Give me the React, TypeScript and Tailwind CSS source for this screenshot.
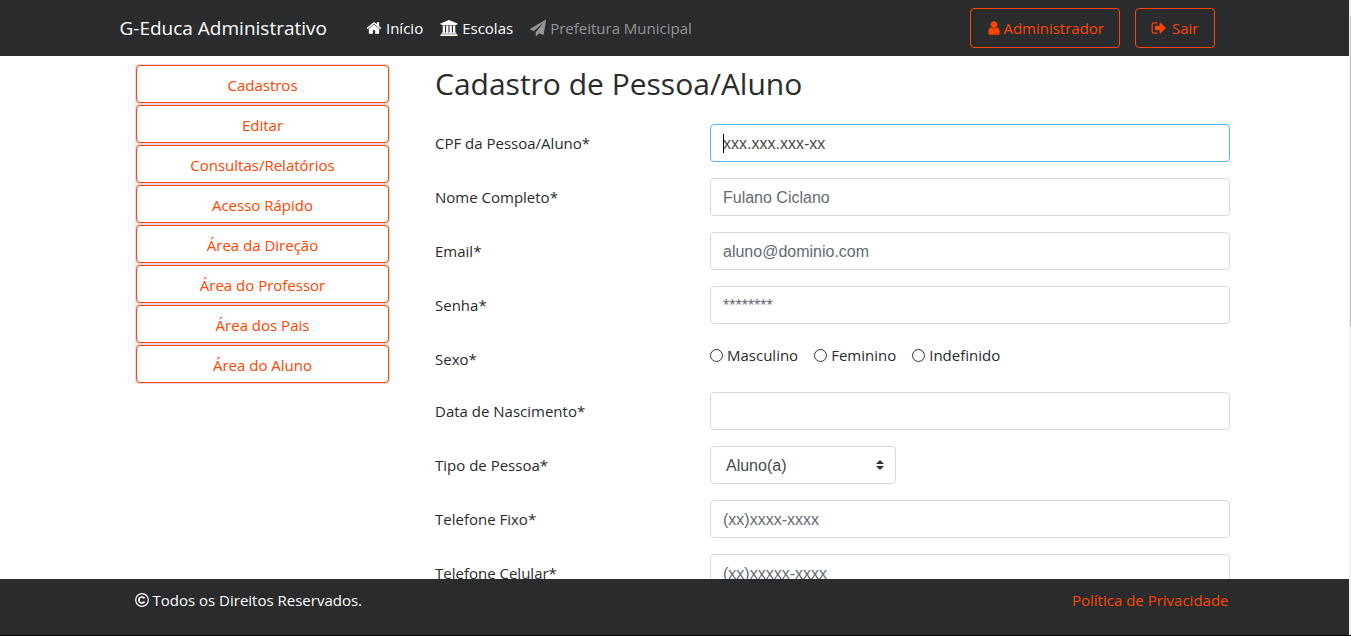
import type { ReactNode } from "react";

const paths = {
  home: "M1472 992v480q0 26-19 45t-45 19h-384v-384h-256v384h-384q-26 0-45-19t-19-45v-480q0-1 .5-3t.5-3l575-474 575 474q1 2 1 6zm223-69l-62 74q-8 9-21 11h-3q-13 0-21-7l-692-577-692 577q-12 8-24 7-13-2-21-11l-62-74q-8-10-7-23.5t11-21.5l719-599q32-26 76-26t76 26l244 204v-195q0-14 9-23t23-9h192q14 0 23 9t9 23v408l219 182q10 8 11 21.5t-7 23.5z",
  university:
    "M960 0l960 384v128h-128q0 26-20.500 45t-48.500 19h-1526q-28 0-48.500-19t-20.500-45h-128v-128zm-704 640h256v768h128v-768h256v768h128v-768h256v768h128v-768h256v768h59q28 0 48.500 19t20.500 45v64h-1664v-64q0-26 20.500-45t48.500-19h59v-768zm1595 960q28 0 48.500 19t20.500 45v128h-1920v-128q0-26 20.500-45t48.500-19h1782z",
  plane:
    "M1764 11q33 24 27 64l-256 1536q-5 29-32 45-14 8-31 8-11 0-24-5l-453-185-242 295q-18 23-49 23-13 0-22-4-19-7-30.500-23.500t-11.500-36.500v-349l864-1059-1069 925-395-162q-37-14-40-55-2-40 32-59l1664-960q15-9 32-9 20 0 36 11z",
  user: "M1536 1399q0 109-62.500 187t-150.500 78h-854q-88 0-150.500-78t-62.500-187q0-85 8.500-160.500t31.500-152 58.500-131 94-89 134.500-34.500q131 128 313 128t313-128q76 0 134.500 34.500t94 89 58.500 131 31.500 152 8.500 160.500zm-256-887q0 159-112.500 271.500t-271.500 112.500-271.500-112.500-112.500-271.500 112.500-271.500 271.500-112.500 271.500 112.500 112.500 271.500z",
  signOut:
    "M704 1440q0 4 1 20t.5 26.500-3 23.500-10 19.500-20.500 6.500h-320q-119 0-203.500-84.500t-84.500-203.500v-704q0-119 84.500-203.500t203.500-84.500h320q13 0 22.500 9.500t9.500 22.500q0 4 1 20t.5 26.500-3 23.500-10 19.500-20.500 6.500h-320q-66 0-113 47t-47 113v704q0 66 47 113t113 47h312l11.500 1 11.500 3 8 5.500 7 9 2 13.500zm928-544q0 26-19 45l-544 544q-19 19-45 19t-45-19-19-45v-288h-448q-26 0-45-19t-19-45v-384q0-26 19-45t45-19h448v-288q0-26 19-45t45-19 45 19l544 544q19 19 19 45z",
};

function Icon({ d, viewBox = "0 0 1792 1792", className = "w-4" }: { d: string; viewBox?: string; className?: string }) {
  return (
    <svg viewBox={viewBox} className={`h-4 shrink-0 ${className}`} fill="currentColor" aria-hidden="true">
      <path d={d} />
    </svg>
  );
}

const menu = [
  "Cadastros",
  "Editar",
  "Consultas/Relatórios",
  "Acesso Rápido",
  "Área da Direção",
  "Área do Professor",
  "Área dos Pais",
  "Área do Aluno",
];

const control =
  "block h-[38px] w-full rounded border border-[#d9d9d9] bg-white px-3 pt-0.5 font-['Liberation_Sans',Arial,sans-serif] text-base text-[#464a4c] outline-none placeholder:text-[#636c72] placeholder:opacity-100";

function Row({ id, label, children }: { id: string; label: string; children: ReactNode }) {
  return (
    <div className="-mx-[15px] mb-4 flex">
      <label htmlFor={id} className="w-1/3 px-[15px] py-[7px] leading-6">
        {label}
      </label>
      <div className="w-2/3 px-[15px]">{children}</div>
    </div>
  );
}

const outline =
  "flex h-10 items-center gap-px rounded border border-[#ff4500] px-[15px] text-[#ff4500]";

export default function App() {
  return (
    <div className="flex h-screen border-b border-black bg-white font-['Open_Sans','Noto_Sans',sans-serif] text-[15px] leading-6 text-[#292b2c]">
      <div className="flex min-w-0 flex-1 flex-col">
        <header className="shrink-0 bg-[#292b2c] text-white">
          <div className="mx-auto flex max-w-[1140px] items-center px-[15px] py-2">
            <a href="#" className="mr-[39px] text-[19px] leading-[30px]">
              G-Educa Administrativo
            </a>
            <nav className="flex items-center gap-[17px]">
              <a href="#" className="flex items-center gap-1">
                <Icon d={paths.home} />
                Início
              </a>
              <a href="#" className="flex items-center gap-1">
                <Icon d={paths.university} viewBox="0 0 1920 1792" className="w-[18px]" />
                Escolas
              </a>
              <a href="#" className="flex items-center gap-1 text-[#949595]">
                <Icon d={paths.plane} />
                Prefeitura Municipal
              </a>
            </nav>
            <div className="mr-[15px] ml-auto flex gap-[15px]">
              <button type="button" className={outline}>
                <Icon d={paths.user} />
                Administrador
              </button>
              <button type="button" className={outline}>
                <Icon d={paths.signOut} />
                <span className="pl-1">Sair</span>
              </button>
            </div>
          </div>
        </header>

        <main className="min-h-0 flex-1 overflow-y-auto pl-px [scrollbar-width:none]">
          <div className="mx-auto flex max-w-[1140px] px-[15px] pt-2">
            <aside className="w-[270px] shrink-0 pl-[15px]">
              <ul>
                {menu.map((item) => (
                  <li key={item} className="rounded bg-[#dddddd] p-px">
                    <button
                      type="button"
                      className="block h-[38px] w-full rounded border border-[#ff4500] bg-white pt-0.5 text-center text-[#ff4500]"
                    >
                      {item}
                    </button>
                  </li>
                ))}
              </ul>
            </aside>

            <form className="min-w-0 flex-1 pl-[45px]">
              <h1 className="mb-5 text-[30px] leading-10">Cadastro de Pessoa/Aluno</h1>
              <Row id="cpf" label="CPF da Pessoa/Aluno*">
                <div className="relative">
                  <input
                    id="cpf"
                    placeholder="xxx.xxx.xxx-xx"
                    className="block h-[38px] w-full rounded border border-[#5cb3fd] bg-white px-3 pt-0.5 font-['Liberation_Sans',Arial,sans-serif] text-base text-[#464a4c] outline-none placeholder:text-[#464a4c] placeholder:opacity-100"
                  />
                  <span className="absolute top-2.5 left-[13px] h-[19px] w-px bg-black" />
                </div>
              </Row>
              <Row id="nome" label="Nome Completo*">
                <input id="nome" placeholder="Fulano Ciclano" className={control} />
              </Row>
              <Row id="email" label="Email*">
                <input id="email" type="email" placeholder="aluno@dominio.com" className={control} />
              </Row>
              <Row id="senha" label="Senha*">
                <input id="senha" type="password" placeholder="********" className={control} />
              </Row>
              <fieldset className="-mx-[15px] mb-3.5 flex">
                <legend className="float-left w-1/3 px-[15px] py-[7px]">Sexo*</legend>
                <div className="flex w-2/3 items-start gap-4 px-[15px] pt-[3px]">
                  {["Masculino", "Feminino", "Indefinido"].map((sexo) => (
                    <label key={sexo} className="flex items-center gap-1">
                      <input
                        type="radio"
                        name="sexo"
                        value={sexo}
                        className="size-[13px] appearance-none rounded-full border border-[#333333] bg-white checked:border-4"
                      />
                      {sexo}
                    </label>
                  ))}
                </div>
              </fieldset>
              <Row id="nascimento" label="Data de Nascimento*">
                <input id="nascimento" className={control} />
              </Row>
              <Row id="tipo" label="Tipo de Pessoa*">
                <div className="relative w-[186px]">
                  <select
                    id="tipo"
                    className="block h-[38px] w-full appearance-none rounded border border-[#d9d9d9] bg-white px-[15px] pt-0.5 font-['Liberation_Sans',Arial,sans-serif] text-base text-[#464a4c]"
                  >
                    <option>Aluno(a)</option>
                  </select>
                  <svg
                    viewBox="0 0 8 10"
                    className="pointer-events-none absolute top-3.5 right-3 h-2.5 w-2"
                    fill="#333333"
                    aria-hidden="true"
                  >
                    <path d="M4 0 0 4h8zM4 10 0 6h8z" />
                  </svg>
                </div>
              </Row>
              <Row id="fixo" label="Telefone Fixo*">
                <input id="fixo" type="tel" placeholder="(xx)xxxx-xxxx" className={control} />
              </Row>
              <Row id="celular" label="Telefone Celular*">
                <input id="celular" type="tel" placeholder="(xx)xxxxx-xxxx" className={control} />
              </Row>
            </form>
          </div>
        </main>

        <footer className="shrink-0 bg-[#292b2c] text-white">
          <div className="mx-auto flex max-w-[1140px] justify-between pt-[9px] pr-4 pb-[23px] pl-[30px]">
            <span className="flex items-center gap-1">
              <svg viewBox="0 0 14 14" className="size-3.5" fill="none" stroke="currentColor" aria-hidden="true">
                <circle cx="7" cy="7" r="6.3" strokeWidth="1.2" />
                <path d="M9.500 5.500A3 3 0 1 0 9.500 8.500" strokeWidth="1.700" />
              </svg>
              Todos os Direitos Reservados.
            </span>
            <a href="#" className="text-[#ff4500]">
              Política de Privacidade
            </a>
          </div>
        </footer>
      </div>
      <div className="w-0.5 shrink-0 bg-[#f0f0f0] pt-4">
        <div className="ml-px h-1/2 bg-[#c1c1c1]" />
      </div>
    </div>
  );
}
